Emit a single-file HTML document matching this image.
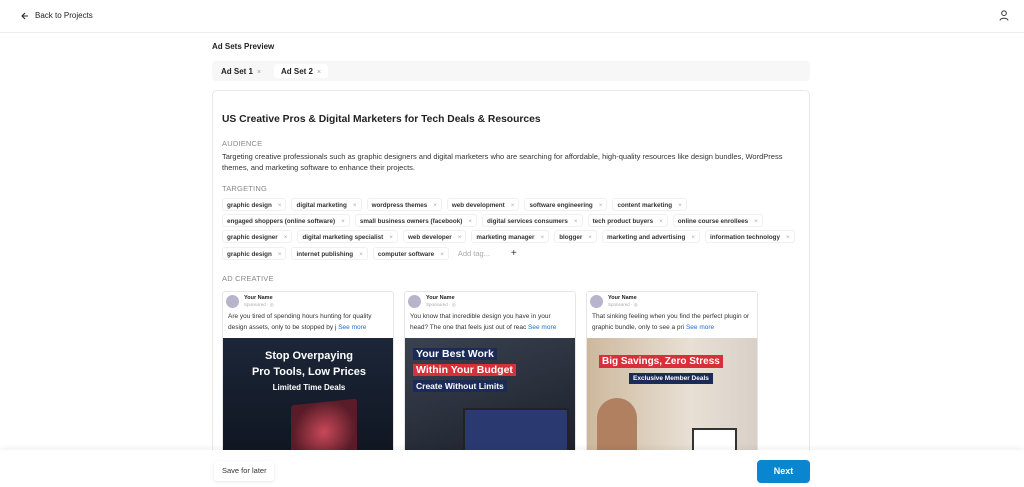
<!DOCTYPE html>
<html><head><style>
*{box-sizing:border-box;margin:0;padding:0}
html,body{width:1024px;height:487px;overflow:hidden}
body{background:#fff;font-family:"Liberation Sans",sans-serif;color:#222;position:relative}
.top{height:33px;border-bottom:1px solid #eee;position:relative}
.back{position:absolute;left:21px;top:11px;font-size:8px;color:#222;display:flex;align-items:center;gap:6px}
.h{position:absolute;left:212px;top:42px;font-size:8px;font-weight:bold}
.tabs{position:absolute;left:212px;top:61px;width:598px;height:20px;background:#f7f7f7;border-radius:4px}
.tab{position:absolute;top:3px;height:14px;font-size:8px;font-weight:bold;padding:3px 7px;border-radius:3px}
.tab span{color:#999;font-weight:normal;margin-left:4px;font-size:7px}
.card{position:absolute;left:212px;top:90px;width:598px;height:420px;border:1px solid #e8e8e8;border-radius:5px}
.title{position:absolute;left:222px;top:114px;font-size:10.3px;font-weight:bold}
.lbl{position:absolute;left:222px;font-size:7.5px;color:#888;letter-spacing:.2px}
.txt{position:absolute;left:222px;top:152px;width:580px;font-size:7.5px;line-height:10.5px;color:#333}
.row{position:absolute;left:222px;display:flex;gap:5px}
.tg{height:13px;font-size:6.3px;font-weight:bold;padding:3px 4px;border:1px solid #f0f0f0;border-radius:3px;white-space:nowrap;color:#333}
.tg:after{content:"×";color:#aaa;font-weight:normal;margin-left:6px}
.ad{position:absolute;top:291px;width:172px;height:170px;border:1px solid #e6e6e6;border-radius:3px;overflow:hidden;background:#fff}
.av{position:absolute;left:3px;top:3px;width:13px;height:13px;border-radius:50%;background:#b7b4cc}
.nm{position:absolute;left:21px;top:3px;font-size:5.5px;font-weight:bold}
.sp{position:absolute;left:21px;top:10px;font-size:4.5px;color:#aaa}
.cp{position:absolute;left:5px;top:20px;width:160px;font-size:6.5px;line-height:10.5px;color:#333}
.cp b{color:#1a6fd1;font-weight:normal}
.img{position:absolute;left:0;top:46px;width:172px;height:124px}
.foot{position:absolute;left:0;top:450px;width:1024px;height:37px;background:#fff;box-shadow:0 -2px 6px rgba(0,0,0,.06)}
.save{position:absolute;left:214px;top:461px;width:60px;height:20px;font-size:7.5px;padding:5px 8px;box-shadow:0 1px 3px rgba(0,0,0,.1);border-radius:3px;color:#333;white-space:nowrap}
.next{position:absolute;left:757px;top:460px;width:53px;height:23px;background:#0a86d0;color:#fff;font-weight:bold;font-size:9px;text-align:center;line-height:23px;border-radius:4px}
.w{color:#fff;font-weight:bold;text-align:center;position:absolute;width:100%}
</style></head><body>
<div class="top">
<div class="back"><svg width="8" height="8" viewBox="0 0 8 8"><path d="M7 4H1M4 1L1 4l3 3" stroke="#222" fill="none" stroke-width="1"/></svg>Back to Projects</div>
<svg style="position:absolute;left:999px;top:10px" width="10" height="11" viewBox="0 0 10 11"><circle cx="5" cy="3.2" r="2.3" stroke="#333" fill="none"/><path d="M1 10.5c0-3 8-3 8 0" stroke="#333" fill="none"/></svg>
</div>
<div class="h">Ad Sets Preview</div>
<div class="tabs"><div class="tab" style="left:2px">Ad Set 1<span>×</span></div><div class="tab" style="left:62px;background:#fff">Ad Set 2<span>×</span></div></div>
<div class="card"></div>
<div class="title">US Creative Pros &amp; Digital Marketers for Tech Deals &amp; Resources</div>
<div class="lbl" style="top:139px">AUDIENCE</div>
<div class="txt">Targeting creative professionals such as graphic designers and digital marketers who are searching for affordable, high-quality resources like design bundles, WordPress themes, and marketing software to enhance their projects.</div>
<div class="lbl" style="top:184px">TARGETING</div>
<div class="row" style="top:198px"><div class="tg">graphic design</div><div class="tg">digital marketing</div><div class="tg">wordpress themes</div><div class="tg">web development</div><div class="tg">software engineering</div><div class="tg">content marketing</div></div>
<div class="row" style="top:214px"><div class="tg">engaged shoppers (online software)</div><div class="tg">small business owners (facebook)</div><div class="tg">digital services consumers</div><div class="tg">tech product buyers</div><div class="tg">online course enrollees</div></div>
<div class="row" style="top:230px"><div class="tg">graphic designer</div><div class="tg">digital marketing specialist</div><div class="tg">web developer</div><div class="tg">marketing manager</div><div class="tg">blogger</div><div class="tg">marketing and advertising</div><div class="tg">information technology</div></div>
<div class="row" style="top:247px"><div class="tg">graphic design</div><div class="tg">internet publishing</div><div class="tg">computer software</div><div style="font-size:7.5px;color:#aaa;padding:2px 4px;width:52px">Add tag...</div><div style="font-size:10px;color:#333;line-height:14px">+</div></div>
<div class="lbl" style="top:274px">AD CREATIVE</div>

<div class="ad" style="left:222px"><div class="av"></div><div class="nm">Your Name</div><div class="sp">Sponsored · ◎</div>
<div class="cp">Are you tired of spending hours hunting for quality design assets, only to be stopped by j <b>See more</b></div>
<div class="img" style="background:linear-gradient(180deg,#1c2638,#0f1520)">
<div class="w" style="top:12px;font-size:11px">Stop Overpaying</div><div class="w" style="top:28px;font-size:11px">Pro Tools, Low Prices</div><div class="w" style="top:45px;font-size:8px">Limited Time Deals</div>
<div style="position:absolute;left:68px;top:64px;width:66px;height:60px;background:radial-gradient(circle,#c84858,#5a1c28 70%);transform:skewY(-6deg);border-radius:3px"></div></div></div>

<div class="ad" style="left:404px"><div class="av"></div><div class="nm">Your Name</div><div class="sp">Sponsored · ◎</div>
<div class="cp">You know that incredible design you have in your head? The one that feels just out of reac <b>See more</b></div>
<div class="img" style="background:linear-gradient(160deg,#3a4250,#1a1e28)">
<div style="position:absolute;left:8px;top:10px;font-size:10.5px;font-weight:bold;color:#fff;background:#1c2a58;padding:0 3px">Your Best Work</div>
<div style="position:absolute;left:8px;top:26px;font-size:10.5px;font-weight:bold;color:#fff;background:#d8303a;padding:0 3px">Within Your Budget</div>
<div style="position:absolute;left:8px;top:42px;font-size:8.5px;font-weight:bold;color:#fff;background:#1c2a58;padding:1px 3px">Create Without Limits</div>
<div style="position:absolute;left:58px;top:70px;width:106px;height:54px;background:#2a3a70;border:2px solid #222"></div></div></div>

<div class="ad" style="left:586px"><div class="av"></div><div class="nm">Your Name</div><div class="sp">Sponsored · ◎</div>
<div class="cp">That sinking feeling when you find the perfect plugin or graphic bundle, only to see a pri <b>See more</b></div>
<div class="img" style="background:linear-gradient(90deg,#cdb89c,#e8e0d4 60%,#d8d0c8)">
<div style="position:absolute;left:12px;top:17px;font-size:10px;font-weight:bold;color:#fff;background:#d8303a;padding:1px 3px">Big Savings, Zero Stress</div>
<div style="position:absolute;left:42px;top:35px;font-size:6.5px;font-weight:bold;color:#fff;background:#1c2a58;padding:2px 4px">Exclusive Member Deals</div>
<div style="position:absolute;left:10px;top:60px;width:40px;height:64px;background:#b08060;border-radius:20px 20px 0 0"></div>
<div style="position:absolute;left:105px;top:90px;width:45px;height:34px;background:#fff;border:2px solid #333"></div></div></div>

<div class="foot"></div>
<div class="save">Save for later</div>
<div class="next">Next</div>
</body></html>
